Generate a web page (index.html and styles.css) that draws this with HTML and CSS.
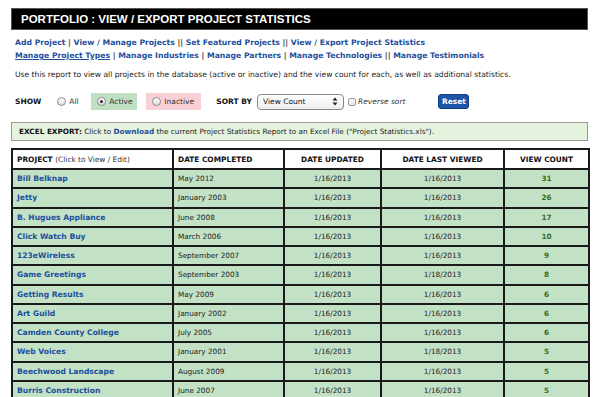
FILE: index.html
```html
<!DOCTYPE html>
<html lang="en">
<head>
    <meta charset="UTF-8">
    <meta name="viewport" content="width=device-width, initial-scale=1.0">
    <title>Portfolio : View / Export Project Statistics</title>
    <link rel="stylesheet" href="styles.css">
</head>
<body>
    <div class="page">
        <h1 class="title">PORTFOLIO : VIEW / EXPORT PROJECT STATISTICS</h1>

        <div class="nav">
            <div class="nav-line">
                <a href="#">Add Project</a> | <a href="#">View / Manage Projects</a> || <a href="#">Set Featured Projects</a> || <a href="#">View / Export Project Statistics</a>
            </div>
            <div class="nav-line">
                <a href="#" class="current">Manage Project Types</a> | <a href="#">Manage Industries</a> | <a href="#">Manage Partners</a> | <a href="#">Manage Technologies</a> || <a href="#">Manage Testimonials</a>
            </div>
        </div>

        <p class="intro">Use this report to view all projects in the database (active or inactive) and the view count for each, as well as additional statistics.</p>

        <form class="filters">
            <span class="label">SHOW</span>
            <label class="choice all"><input type="radio" name="show"> All</label>
            <label class="choice active"><input type="radio" name="show" checked> Active</label>
            <label class="choice inactive"><input type="radio" name="show"> Inactive</label>
            <span class="label sort-label">SORT BY</span>
            <span class="select-wrap">
                <select class="sort">
                    <option>View Count</option>
                    <option>Project</option>
                    <option>Date Completed</option>
                </select>
                <svg class="arrows" width="6" height="9" viewBox="0 0 6 9">
                    <path d="M3 0.5 L5.5 3.5 L0.5 3.5 Z M3 8.5 L5.5 5.5 L0.5 5.5 Z" fill="#222"/>
                </svg>
            </span>
            <label class="reverse"><input type="checkbox"> Reverse sort</label>
            <button type="button" class="reset">Reset</button>
        </form>

        <div class="export">
            <b>EXCEL EXPORT:</b> Click to <a href="#">Download</a> the current Project Statistics Report to an Excel File ("Project Statistics.xls").
        </div>

        <table class="stats">
            <colgroup>
                <col style="width: 161px">
                <col style="width: 111px">
                <col style="width: 97px">
                <col style="width: 123px">
                <col style="width: 85px">
            </colgroup>
            <thead>
                <tr>
                    <th class="left">PROJECT <span class="hint">(Click to View / Edit)</span></th>
                    <th class="left">DATE COMPLETED</th>
                    <th>DATE UPDATED</th>
                    <th>DATE LAST VIEWED</th>
                    <th>VIEW COUNT</th>
                </tr>
            </thead>
            <tbody>
                <tr><td><a href="#">Bill Belknap</a></td><td class="left">May 2012</td><td>1/16/2013</td><td>1/16/2013</td><td class="count">31</td></tr>
                <tr><td><a href="#">Jetty</a></td><td class="left">January 2003</td><td>1/16/2013</td><td>1/16/2013</td><td class="count">26</td></tr>
                <tr><td><a href="#">B. Hugues Appliance</a></td><td class="left">June 2008</td><td>1/16/2013</td><td>1/16/2013</td><td class="count">17</td></tr>
                <tr><td><a href="#">Click Watch Buy</a></td><td class="left">March 2006</td><td>1/16/2013</td><td>1/16/2013</td><td class="count">10</td></tr>
                <tr><td><a href="#">123eWireless</a></td><td class="left">September 2007</td><td>1/16/2013</td><td>1/16/2013</td><td class="count">9</td></tr>
                <tr><td><a href="#">Game Greetings</a></td><td class="left">September 2003</td><td>1/16/2013</td><td>1/18/2013</td><td class="count">8</td></tr>
                <tr><td><a href="#">Getting Results</a></td><td class="left">May 2009</td><td>1/16/2013</td><td>1/16/2013</td><td class="count">6</td></tr>
                <tr><td><a href="#">Art Guild</a></td><td class="left">January 2002</td><td>1/16/2013</td><td>1/16/2013</td><td class="count">6</td></tr>
                <tr><td><a href="#">Camden County College</a></td><td class="left">July 2005</td><td>1/16/2013</td><td>1/16/2013</td><td class="count">6</td></tr>
                <tr><td><a href="#">Web Voices</a></td><td class="left">January 2001</td><td>1/16/2013</td><td>1/18/2013</td><td class="count">5</td></tr>
                <tr><td><a href="#">Beechwood Landscape</a></td><td class="left">August 2009</td><td>1/16/2013</td><td>1/16/2013</td><td class="count">5</td></tr>
                <tr><td><a href="#">Burris Construction</a></td><td class="left">June 2007</td><td>1/16/2013</td><td>1/16/2013</td><td class="count">5</td></tr>
            </tbody>
        </table>
    </div>
</body>
</html>
```

FILE: styles.css
```css
body {
    margin: 0;
    padding: 0;
    background-color: #fff;
    color: #222;
    font-family: "DejaVu Sans", Verdana, sans-serif;
    font-size: 7.5px;
}

.page {
    width: 577px;
    padding: 8px 0 0 11px;
}

a {
    color: #1c4f9e;
    text-decoration: none;
}

/* black title bar */
.title {
    margin: 0;
    height: 22px;
    line-height: 20px;
    padding-left: 9px;
    background-color: #000;
    border: 1px solid #555;
    box-sizing: border-box;
    color: #fff;
    font-family: "Liberation Sans", Arial, sans-serif;
    font-size: 11.5px;
    font-weight: bold;
}

.nav {
    margin-top: 6px;
    padding-left: 4px;
    font-size: 7.7px;
    font-weight: bold;
    color: #444;
    line-height: 13px;
}

.nav a.current {
    text-decoration: underline;
}

.intro {
    margin: 7px 0 0 0;
    padding-left: 4px;
    line-height: 12px;
    font-size: 7.6px;
}

/* show / sort controls */
.filters {
    margin-top: 12px;
    height: 17px;
    display: flex;
    align-items: center;
    padding-left: 4px;
}

.label {
    font-weight: bold;
    color: #111;
    margin-right: 16px;
}

.sort-label {
    margin-left: 0;
    margin-right: 5px;
}

.choice {
    height: 17px;
    box-sizing: border-box;
    display: flex;
    align-items: center;
    gap: 2px;
    padding-left: 6px;
    color: #333;
}

.choice.all {
    padding-left: 0;
    width: 34px;
}

.choice.active {
    width: 46px;
    margin-right: 9px;
    background-color: #bfe0c2;
}

.choice.inactive {
    width: 55px;
    margin-right: 15px;
    background-color: #f9d0d5;
}

.choice input {
    appearance: none;
    width: 9px;
    height: 9px;
    margin: 0 1px 0 0;
    border: 1px solid #8a8a8a;
    border-radius: 50%;
    background: linear-gradient(#fff, #ddd);
    position: relative;
}

.choice input:checked::after {
    content: "";
    position: absolute;
    left: 2px;
    top: 2px;
    width: 3px;
    height: 3px;
    border-radius: 50%;
    background-color: #222;
}

.select-wrap {
    position: relative;
    display: inline-block;
    height: 16px;
}

.sort {
    appearance: none;
    width: 87px;
    height: 16px;
    padding: 0 0 0 5px;
    border: 1px solid #888;
    border-radius: 4px;
    background: linear-gradient(#fff, #eee);
    font-family: "DejaVu Sans", Verdana, sans-serif;
    font-size: 7.5px;
    color: #111;
}

.arrows {
    position: absolute;
    right: 6px;
    top: 3.5px;
    pointer-events: none;
}

.reverse {
    display: flex;
    align-items: center;
    margin-left: 4px;
    font-style: italic;
    color: #333;
}

.reverse input {
    appearance: none;
    width: 8px;
    height: 8px;
    margin: 0 2px 0 0;
    border: 1px solid #999;
    border-radius: 2px;
    background: linear-gradient(#fff, #e6e6e6);
}

.reset {
    margin-left: 33px;
    height: 15px;
    width: 31px;
    padding: 0;
    border: 1px solid #0f3d80;
    border-radius: 3px;
    background-color: #1d56a8;
    color: #fff;
    font-family: "DejaVu Sans", Verdana, sans-serif;
    font-size: 7.5px;
    font-weight: bold;
}

/* excel export bar */
.export {
    margin-top: 12px;
    height: 19px;
    line-height: 17px;
    box-sizing: border-box;
    padding-left: 7px;
    background-color: #e4f2de;
    border: 1px solid #9a9a9a;
    color: #222;
    font-size: 7.3px;
}

.export b {
    color: #111;
}

.export a {
    font-weight: bold;
}

/* stats table */
.stats {
    margin-top: 7px;
    width: 577px;
    table-layout: fixed;
    border-collapse: collapse;
    border: 2px solid #1a1a1a;
}

.stats th,
.stats td {
    border: 2px solid #1a1a1a;
    padding: 0 4px;
    text-align: center;
    white-space: nowrap;
    overflow: hidden;
}

.stats th {
    height: 18px;
    background-color: #fff;
    color: #111;
    font-size: 7.4px;
    font-weight: bold;
}

.stats td {
    height: 17.25px;
    background-color: #c3e1c5;
    color: #222;
    font-size: 7.3px;
}

.stats .left {
    text-align: left;
}

.stats td:first-child {
    text-align: left;
}

.stats td a {
    font-size: 7.6px;
    font-weight: bold;
}

.stats .hint {
    font-weight: normal;
    color: #333;
}

.stats .count {
    font-weight: bold;
    color: #3b6e1d;
}
```
